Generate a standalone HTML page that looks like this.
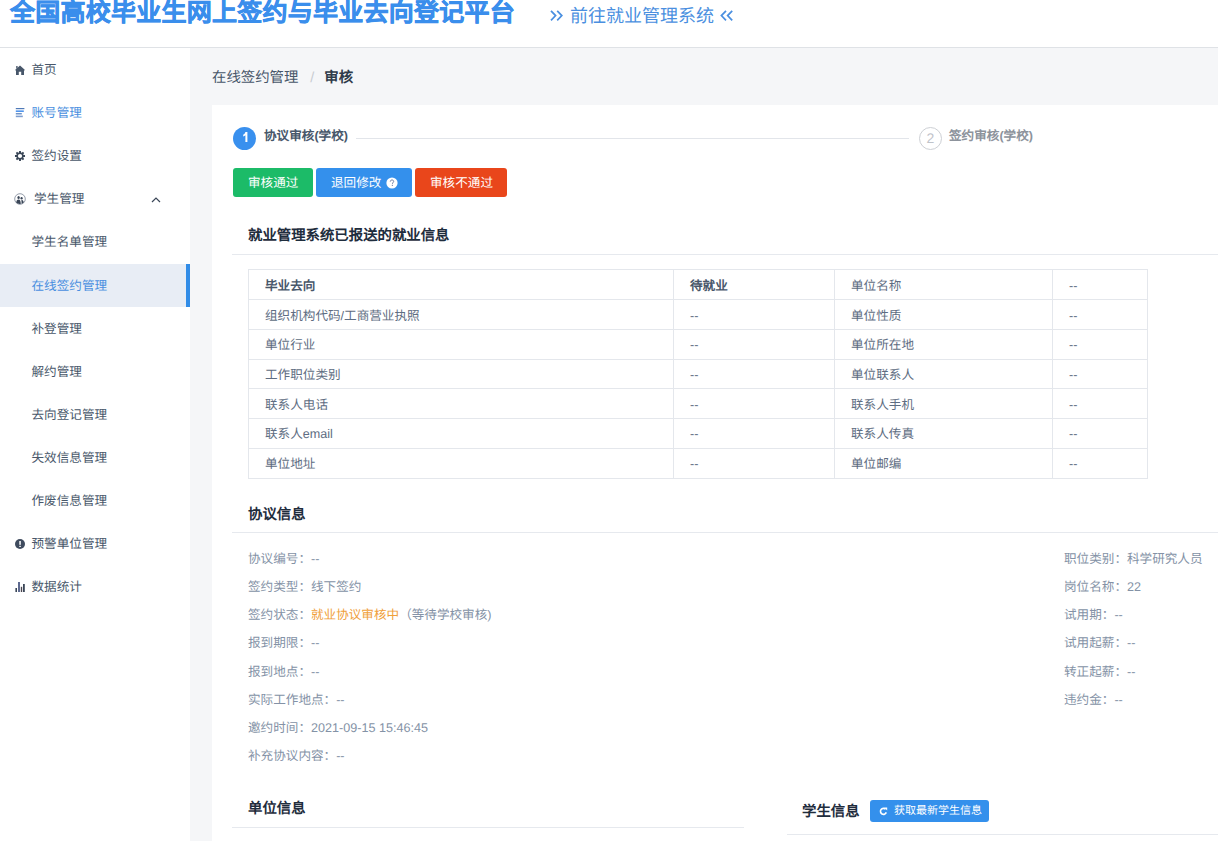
<!DOCTYPE html>
<html lang="zh-CN">
<head>
<meta charset="utf-8">
<style>
*{box-sizing:border-box;margin:0;padding:0}
html,body{width:1218px;height:841px;overflow:hidden;background:#fff;font-family:"Liberation Sans",sans-serif;color:#48576a;text-rendering:geometricPrecision}
.a{position:absolute;white-space:nowrap}
#header{position:absolute;left:0;top:0;width:1218px;height:48px;background:#fff;border-bottom:1px solid #dfe2e6}
#title{left:10px;top:-5px;font-size:25px;font-weight:bold;color:#3a8eec;line-height:36px;letter-spacing:0.25px;-webkit-text-stroke:0.6px #3a8eec}
#link{left:550px;top:3px;width:190px;height:30px;font-size:18px;color:#4a8fe0;line-height:26px}
#side{position:absolute;left:0;top:48px;width:190px;height:793px;background:#fff}
.mi{position:absolute;left:0;width:190px;height:43px;font-size:12.6px;line-height:43px;color:#48576a}
.mi .t{position:absolute;left:31.5px;top:1px}
.mi svg{position:absolute}
.mi.act{background:#e8edf5;color:#4a8fe0}
.mi.act:after{content:"";position:absolute;right:0;top:0;width:4px;height:43px;background:#318ce7}
#main{position:absolute;left:190px;top:48px;width:1028px;height:793px;background:#f5f6f8}
#crumb{left:212px;top:67.5px;font-size:14.4px;line-height:20px;color:#48576a}
#crumb .sep{color:#c8ccd2;margin:0 10px 0 12px}
#crumb b{color:#2f3b4a}
#card{position:absolute;left:212px;top:105px;width:1006px;height:736px;background:#fff}
.stepc{position:absolute;width:23px;height:23px;border-radius:50%;font-size:14px;line-height:24px;text-align:center}
.stept{font-size:12.6px;font-weight:bold;line-height:18px}
.btn{position:absolute;top:168px;height:29px;border-radius:3px;color:#fff;font-size:12.6px;line-height:31px;padding-left:15px}
.sec{font-size:14.4px;font-weight:bold;color:#1f2d3d;line-height:20px}
.hr{position:absolute;height:1px;background:#e6e9ee}
table{position:absolute;left:248px;top:269px;border-collapse:collapse;font-size:12.6px;color:#5e6d82}
td{border:1px solid #e4e7ec;height:29.86px;padding:3px 0 0 16px;line-height:16px;white-space:nowrap}
tr.r2 td{padding-top:1.5px}
tr.r3 td{padding-top:0}
td.h{font-weight:bold;color:#48576a}
.info{font-size:12.6px;color:#8492a6;line-height:18px}
.info .v{color:#8492a6}
</style>
</head>
<body>
<div id="header">
  <div id="title" class="a">全国高校毕业生网上签约与毕业去向登记平台</div>
  <div id="link" class="a"><svg style="position:absolute;left:0;top:7px" width="14" height="12" viewBox="0 0 14 12"><path d="M1 0.8L5.6 5.6 1 10.4M7.2 0.8L11.8 5.6 7.2 10.4" fill="none" stroke="#4a8fe0" stroke-width="1.7"/></svg><span style="position:absolute;left:20px;top:0">前往就业管理系统</span><svg style="position:absolute;left:170px;top:7px" width="14" height="12" viewBox="0 0 14 12"><path d="M6 0.8L1.4 5.6 6 10.4M12.2 0.8L7.6 5.6 12.2 10.4" fill="none" stroke="#4a8fe0" stroke-width="1.7"/></svg></div>
</div>
<div id="side">
  <div class="mi" style="top:0">
    <svg style="left:15px;top:16.5px" width="10" height="10" viewBox="0 0 10 10"><path d="M1 10V5.2L0.5 5.6 0 5 5 0.6 10 5 9.5 5.6 9 5.2V10H6.2V6.8H3.8V10Z M1.2 1H2.6V2.6L1.2 3.8Z" fill="#48576a"/></svg>
    <span class="t">首页</span></div>
  <div class="mi" style="top:43px;color:#4a8fe0">
    <svg style="left:15px;top:17px" width="10" height="10" viewBox="0 0 10 10"><rect x="0.8" y="0" width="8.6" height="1.2" fill="#4f7ab8"/><rect x="0.8" y="2.4" width="8" height="1.6" fill="#4f94ec"/><rect x="0.8" y="5.2" width="6" height="1.2" fill="#4f7ab8"/><rect x="0.8" y="7.6" width="7" height="1.6" fill="#7f9fd0"/></svg>
    <span class="t">账号管理</span></div>
  <div class="mi" style="top:86px">
    <svg style="left:14px;top:16px" width="12" height="12" viewBox="-6 -6 12 12"><path fill="#3a4657" fill-rule="evenodd" d="M-1.08 -3.54 -0.89 -5.02 0.89 -5.02 1.08 -3.54 1.74 -3.27 2.93 -4.18 4.18 -2.93 3.27 -1.74 3.54 -1.08 5.02 -0.89 5.02 0.89 3.54 1.08 3.27 1.74 4.18 2.93 2.93 4.18 1.74 3.27 1.08 3.54 0.89 5.02 -0.89 5.02 -1.08 3.54 -1.74 3.27 -2.93 4.18 -4.18 2.93 -3.27 1.74 -3.54 1.08 -5.02 0.89 -5.02 -0.89 -3.54 -1.08 -3.27 -1.74 -4.18 -2.93 -2.93 -4.18 -1.74 -3.27Z M2.10 0A2.10 2.10 0 1 0 -2.10 0A2.10 2.10 0 1 0 2.10 0Z"/></svg>
    <span class="t">签约设置</span></div>
  <div class="mi" style="top:129px">
    <svg style="left:14px;top:16px" width="12" height="12" viewBox="0 0 12 12"><circle cx="6" cy="6" r="5.3" fill="none" stroke="#7a8494" stroke-width="0.8"/><ellipse cx="4.6" cy="4.6" rx="1.2" ry="1.5" fill="#3a4657"/><ellipse cx="7.6" cy="5.2" rx="1.1" ry="1.3" fill="#3a4657"/><path d="M2.2 9.6C2.4 7.4 3.2 6.4 4.6 6.4 6 6.4 6.6 7.4 6.8 10.8 5.6 11.2 3.6 11 2.2 9.6Z" fill="#3a4657"/><path d="M7.4 7C8.6 7 9.4 7.6 9.8 9.2 9.2 10 8.4 10.6 7.6 10.8 7.6 9 7.4 7.8 7.4 7Z" fill="#3a4657"/></svg>
    <span class="t" style="left:34px">学生管理</span>
    <svg style="left:150.5px;top:20px" width="10" height="6" viewBox="0 0 10 6"><path d="M1 5L5 1 9 5" fill="none" stroke="#3a4657" stroke-width="1.2"/></svg></div>
  <div class="mi" style="top:172px"><span class="t">学生名单管理</span></div>
  <div class="mi act" style="top:216px"><span class="t">在线签约管理</span></div>
  <div class="mi" style="top:259px"><span class="t">补登管理</span></div>
  <div class="mi" style="top:302px"><span class="t">解约管理</span></div>
  <div class="mi" style="top:345px"><span class="t">去向登记管理</span></div>
  <div class="mi" style="top:388px"><span class="t">失效信息管理</span></div>
  <div class="mi" style="top:431px"><span class="t">作废信息管理</span></div>
  <div class="mi" style="top:474px">
    <svg style="left:15px;top:17px" width="10" height="10" viewBox="0 0 10 10"><circle cx="5" cy="5" r="5" fill="#3f4b5e"/><rect x="4.3" y="2" width="1.5" height="3.8" fill="#fff"/><rect x="4.3" y="6.8" width="1.5" height="1.2" fill="#fff"/></svg>
    <span class="t">预警单位管理</span></div>
  <div class="mi" style="top:517px">
    <svg style="left:15px;top:17px" width="10" height="10" viewBox="0 0 10 10"><rect x="0.4" y="6" width="1.6" height="4" fill="#3a4657"/><rect x="3" y="0" width="2" height="10" fill="#5e6a90"/><rect x="5.8" y="4.8" width="1.4" height="5.2" fill="#4a4650"/><rect x="8" y="2" width="1.8" height="8" fill="#3a4657"/></svg>
    <span class="t">数据统计</span></div>
</div>
<div id="main"></div>
<div id="crumb" class="a">在线签约管理<span class="sep">/</span><b>审核</b></div>
<div id="card"></div>

<!-- steps -->
<div class="stepc" style="left:233px;top:127px;background:#3990ee"><svg style="position:absolute;left:-0.3px;top:-0.5px" width="24" height="24" viewBox="0 0 24 24"><path d="M12.4 5H14.4V15H12.4V8.2C11.8 8.8 11 9.2 10.2 9.5V7.7C11.2 7.3 12 6.4 12.4 5Z" fill="#fff"/></svg></div>
<div class="a stept" style="left:264px;top:127px;color:#48576a">协议审核(学校)</div>
<div class="hr" style="left:356px;top:138px;width:553px;background:#e2e5ea"></div>
<div class="stepc" style="left:919px;top:127px;border:1px solid #cdd0d5;color:#bfc3ca;line-height:21px;font-size:14px">2</div>
<div class="a stept" style="left:949px;top:127px;color:#8d939c">签约审核(学校)</div>

<!-- buttons -->
<div class="btn" style="left:233px;width:80px;background:#1cbb68">审核通过</div>
<div class="btn" style="left:316px;width:96px;background:#3490ec">退回修改<svg style="position:absolute;left:69.5px;top:8.5px" width="12" height="12" viewBox="0 0 12 12"><circle cx="6" cy="6" r="5.6" fill="#fff"/><path d="M4.3 4.6C4.3 3.6 5 3 6 3 7 3 7.7 3.6 7.7 4.4 7.7 5.4 6.4 5.6 6.4 6.8" fill="none" stroke="#6b7aa0" stroke-width="1"/><rect x="5.8" y="7.8" width="1.1" height="1.1" fill="#6b7aa0"/></svg></div>
<div class="btn" style="left:415px;width:92px;background:#e9461b">审核不通过</div>

<!-- section 1 -->
<div class="a sec" style="left:248px;top:226.0px">就业管理系统已报送的就业信息</div>
<div class="hr" style="left:232px;top:254px;width:986px"></div>
<table>
<tr><td class="h" style="width:425px">毕业去向</td><td class="h" style="width:161px">待就业</td><td style="width:218px">单位名称</td><td style="width:95px">--</td></tr>
<tr><td>组织机构代码/工商营业执照</td><td>--</td><td>单位性质</td><td>--</td></tr>
<tr class="r2"><td>单位行业</td><td>--</td><td>单位所在地</td><td>--</td></tr>
<tr class="r2"><td>工作职位类别</td><td>--</td><td>单位联系人</td><td>--</td></tr>
<tr class="r2"><td>联系人电话</td><td>--</td><td>联系人手机</td><td>--</td></tr>
<tr class="r3"><td>联系人email</td><td>--</td><td>联系人传真</td><td>--</td></tr>
<tr class="r3"><td>单位地址</td><td>--</td><td>单位邮编</td><td>--</td></tr>
</table>

<!-- section 2 -->
<div class="a sec" style="left:248px;top:505.0px">协议信息</div>
<div class="hr" style="left:232px;top:532px;width:986px"></div>
<div class="a info" style="left:248px;top:549.5px">协议编号：--</div>
<div class="a info" style="left:248px;top:577.5px">签约类型：线下签约</div>
<div class="a info" style="left:248px;top:605.5px">签约状态：<span style="color:#f0a03a">就业协议审核中</span>（等待学校审核)</div>
<div class="a info" style="left:248px;top:633.5px">报到期限：--</div>
<div class="a info" style="left:248px;top:662.5px">报到地点：--</div>
<div class="a info" style="left:248px;top:690.5px">实际工作地点：--</div>
<div class="a info" style="left:248px;top:718.5px">邀约时间：2021-09-15 15:46:45</div>
<div class="a info" style="left:248px;top:746.5px">补充协议内容：--</div>

<div class="a info" style="left:1064px;top:549.5px">职位类别：科学研究人员</div>
<div class="a info" style="left:1064px;top:577.5px">岗位名称：22</div>
<div class="a info" style="left:1064px;top:605.5px">试用期：--</div>
<div class="a info" style="left:1064px;top:633.5px">试用起薪：--</div>
<div class="a info" style="left:1064px;top:662.5px">转正起薪：--</div>
<div class="a info" style="left:1064px;top:690.5px">违约金：--</div>

<!-- section 3 -->
<div class="a sec" style="left:248px;top:799.0px">单位信息</div>
<div class="hr" style="left:232px;top:827px;width:512px"></div>
<div class="a sec" style="left:802px;top:802.0px">学生信息</div>
<div class="a" style="left:870px;top:800px;width:119px;height:22px;background:#3490ec;border-radius:3px;color:#fff;font-size:11px;line-height:22px">
<svg style="position:absolute;left:8.5px;top:7px" width="9" height="9" viewBox="0 0 9 9"><path d="M7.3 5.4A3 3 0 1 1 6.6 2.2" fill="none" stroke="#fff" stroke-width="1.6"/><path d="M5.2 0.6H8.2V3.6Z" fill="#fff"/></svg>
<span style="position:absolute;left:24px;top:0">获取最新学生信息</span></div>
<div class="hr" style="left:787px;top:834px;width:431px"></div>
</body>
</html>
